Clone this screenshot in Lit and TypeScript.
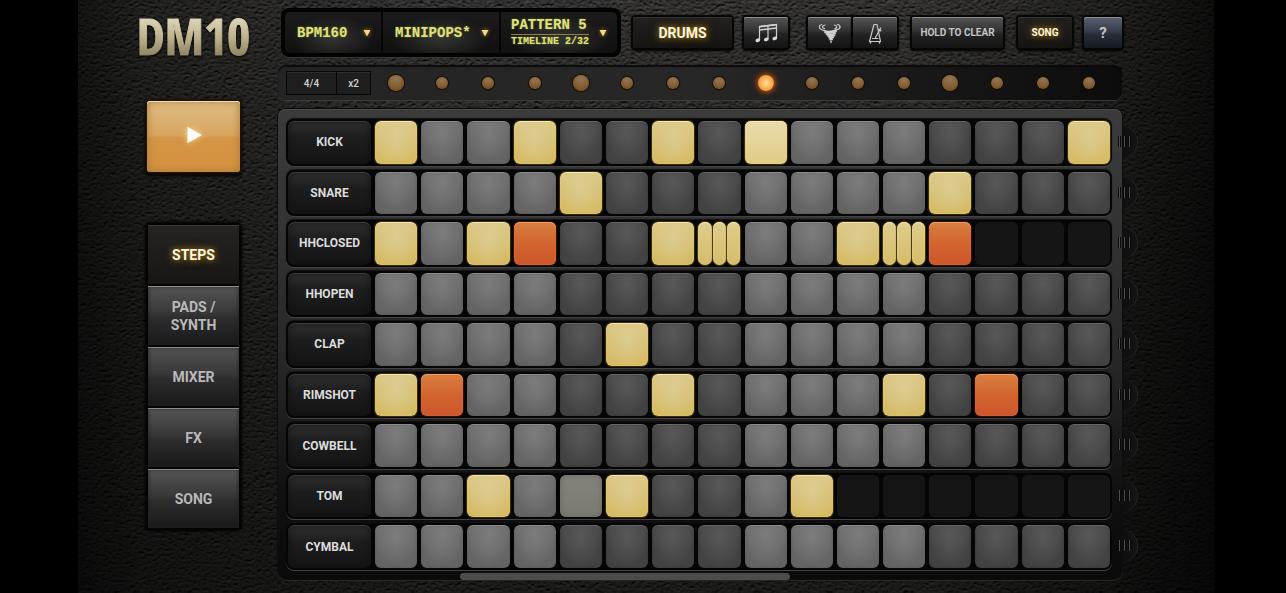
import { LitElement, html, css, svg } from "lit";
import { customElement, property, state } from "lit/decorators.js";
import { classMap } from "lit/directives/class-map.js";

type Step = "off" | "on" | "accent" | "roll" | "none" | "ghost";

interface Track {
  name: string;
  steps: Step[];
}

const CODES: Record<string, Step> = {
  ".": "off",
  y: "on",
  o: "accent",
  r: "roll",
  x: "none",
  g: "ghost",
};

const track = (name: string, pattern: string): Track => ({
  name,
  steps: [...pattern].map((c) => CODES[c]),
});

const TRACKS: Track[] = [
  track("KICK", "y..y..y.y......y"),
  track("SNARE", "....y.......y..."),
  track("HHCLOSED", "y.yo..yr..yroxxx"),
  track("HHOPEN", "................"),
  track("CLAP", ".....y.........."),
  track("RIMSHOT", "yo....y....y.o.."),
  track("COWBELL", "................"),
  track("TOM", "..y.gy...yxxxxxx"),
  track("CYMBAL", "................"),
];

const PLAYHEAD = 8;

@customElement("step-row")
class StepRow extends LitElement {
  @property({ attribute: false }) track!: Track;

  static styles = css`
    :host {
      position: relative;
      display: grid;
      grid-template-columns: 83px repeat(16, minmax(0, 1fr));
      gap: 4px;
      padding: 2px;
      border-radius: 8px;
      background: #050505;
      box-shadow: 0 1px 0 #424242, 0 -1px 1px #111;
    }
    button {
      appearance: none;
      border: 0;
      margin: 0;
      padding: 0;
      font: inherit;
      color: inherit;
      min-width: 0;
    }
    .name {
      border-radius: 7px;
      font-size: 12px;
      font-weight: 700;
      color: #dcdcdc;
      background: linear-gradient(#303030, #1d1d1d 40%, #141414);
      box-shadow: inset 0 1px 0 #3c3c3c, inset 0 0 6px #111;
    }
    .step {
      min-height: 36px;
      border-radius: 6px;
      background: radial-gradient(ellipse at 50% 25%, #7c7c7c, #7c7c7c00 70%), linear-gradient(#707070, #666 60%, #636363);
      box-shadow: inset 0 1px 0 #8a8a8a, inset 0 0 3px #5a5a5a;
    }
    .dim {
      background: radial-gradient(ellipse at 50% 25%, #585858, #58585800 70%), linear-gradient(#4a4a4a, #434343 60%, #424242);
      box-shadow: inset 0 1px 0 #666, inset 0 0 3px #383838;
    }
    .on {
      background: radial-gradient(ellipse at 50% 35%, #dccb90, #dccb9000 75%), linear-gradient(#dcc986, #d7c073 50%, #d5ba62);
      box-shadow: inset 0 1px 0 #f4e7b4, inset 0 0 2px #e6cf7c, 0 0 1px 1px #40310d;
    }
    .lit {
      background: linear-gradient(#e9dbad, #e0cb86);
    }
    .accent {
      background: linear-gradient(#d97f42, #d2642f 50%, #cc562b);
      box-shadow: inset 0 1px 0 #ee9a60, inset 0 0 2px #e3743c, 0 0 1px 1px #32150a;
    }
    .ghost {
      background: linear-gradient(#83837c, #7b7b72);
      box-shadow: inset 0 0 6px #66665b;
    }
    .none {
      background: #151515;
      box-shadow: inset 0 0 2px #1c1c1c;
    }
    .roll {
      display: grid;
      grid-template-columns: repeat(3, minmax(0, 1fr));
      gap: 1px;
      background: none;
      box-shadow: none;
    }
    .hit {
      height: 100%;
      border-radius: 7px;
      background: linear-gradient(#dfcd8c, #d5bc69);
      box-shadow: inset 0 1px 0 #f4e7b4, inset 0 0 2px #eed993, 0 0 1px 1px #4d3c10;
    }
    .grip {
      position: absolute;
      right: -25px;
      top: 7px;
      width: 24px;
      height: 32px;
      border-radius: 0 16px 16px 0;
      background: linear-gradient(90deg, transparent 9px, #0e0e0e 9px, #141414);
      box-shadow: 1px 0 0 #262626;
    }
    .grip svg {
      display: block;
      width: 24px;
      height: 32px;
    }
  `;

  private toggle(i: number) {
    const steps = [...this.track.steps];
    if (steps[i] === "none") return;
    steps[i] = steps[i] === "on" ? "off" : "on";
    this.track = { ...this.track, steps };
  }

  render() {
    const t = this.track;
    return html`
      <button class="name">${t.name}</button>
      ${t.steps.map(
        (s, i) => html`<button
          class=${classMap({
            step: true,
            dim: i % 8 > 3 && s === "off",
            lit: s === "on" && i === PLAYHEAD,
            [s]: s !== "off",
          })}
          aria-label="${t.name} step ${i + 1}"
          aria-pressed=${s === "off" || s === "none" ? "false" : "true"}
          ?disabled=${s === "none"}
          @click=${() => this.toggle(i)}
        >${s === "roll" ? [0, 1, 2].map(() => html`<span class="hit"></span>`) : ""}</button>`
      )}
      <button class="grip" aria-label="${t.name} options">
        <svg viewBox="0 0 24 32">
          <path d="M6.500 10v11M11.500 10v11M16.500 10v11" stroke="#090909" stroke-width="3" />
          <path d="M6.500 10v11M11.500 10v11M16.500 10v11" stroke="#505050" stroke-width="1" />
        </svg>
      </button>
    `;
  }
}

const arrow = html`<svg class="arrow" viewBox="0 0 8 8" aria-hidden="true"><path d="M.5 1h7L4 7.500z" fill="#f5d98a" /></svg>`;

const notes = svg`
  <g fill="none" stroke="#cfcfcf" stroke-width="1.200">
    <path d="M6.500 18V4.500L23.500 2.500V16M15 17V3.500" />
    <path d="M6.500 4.700L23.500 2.700" stroke-width="1.600" />
    <path d="M6.500 8L23.500 6" stroke-width="1.600" />
  </g>
  <g fill="#d6d6d6">
    <ellipse cx="4.800" cy="18.200" rx="2.400" ry="1.800" transform="rotate(-18 4.800 18.200)" />
    <ellipse cx="13.300" cy="17.400" rx="2.400" ry="1.800" transform="rotate(-18 13.300 17.400)" />
    <ellipse cx="21.800" cy="16.400" rx="2.400" ry="1.800" transform="rotate(-18 21.800 16.400)" />
  </g>`;

const tornado = svg`
  <g fill="none" stroke="#cfcfcf" stroke-linecap="round">
    <path d="M4.500 2.500C1.500 3.500 1.500 6.500 5 7.800l2.500.8M8 3C5 3.500 4.500 5.500 7.500 6.600M20.500 2.500c3.500 1 3.500 4-.5 5.300l-2 .5M17.500 3c3 .8 3 2.600.5 3.600" stroke-width="1.200" />
    <path d="M7.500 8.800C11 10 15 9.500 19 8M8 10.500c4 1 7.500.5 11-1M9.500 12.300c3 .7 6 .4 8.800-.9M11 14c2 .6 4.500.3 6.500-.6M12 15.800c1.500.4 2.800.2 4.300-.3M13 17.500h2.200" stroke-width="1.700" />
    <path d="M14 19v1.500" stroke-width="1.400" />
  </g>`;

const metronome = svg`
  <g fill="none" stroke="#c9c9c9" stroke-width="1.200" stroke-linejoin="round" stroke-linecap="round">
    <path d="M12 2.500h3L18.500 19.500H7.500z" />
    <path d="M10.500 16.500h5.500M13.500 15.500L18.800 6" />
    <path d="M16.700 7.500l2 1.200" stroke-width="1.600" />
    <path d="M8.500 20v1M17.500 20v1" stroke-width="1.500" />
  </g>`;

@customElement("app-root")
class AppRoot extends LitElement {
  @state() private page = "STEPS";

  static styles = css`
    :host {
      display: block;
      background: #000;
      font-family: Roboto, "Open Sans", sans-serif;
      color: #c4c4c4;
    }
    button,
    select {
      appearance: none;
      border: 0;
      margin: 0;
      padding: 0;
      font: inherit;
      color: inherit;
      background: none;
    }
    .device {
      position: relative;
      isolation: isolate;
      box-sizing: border-box;
      min-height: 100vh;
      margin: 0 72px 0 78px;
      padding: 8px 92px 14px 60px;
      display: grid;
      grid-template-columns: 111px minmax(0, 1fr);
      gap: 29px;
      background: #171716;
    }
    .leather {
      position: absolute;
      inset: 0;
      width: 100%;
      height: 100%;
      z-index: -2;
    }
    .shade {
      position: absolute;
      inset: 0;
      z-index: -1;
      background: linear-gradient(90deg, #0009, #0005 6%, transparent 30%, transparent 75%, #0005 90%, #000b),
        linear-gradient(transparent, #0002 20%, #0005 60%, #0007);
    }

    .side {
      display: flex;
      flex-direction: column;
    }
    .logo {
      display: flex;
      justify-content: center;
      margin: 0;
      height: 57px;
      line-height: 57px;
      font-family: "Open Sans Condensed", "Noto Sans Condensed", Roboto, sans-serif;
      font-weight: 900;
      font-size: 50px;
      white-space: nowrap;
      color: transparent;
      -webkit-text-stroke: 1px transparent;
      background: linear-gradient(#dcd4b6 20%, #b9ae88 55%, #8d8262 85%);
      -webkit-background-clip: text;
      background-clip: text;
      filter: drop-shadow(0 1px 1px #000);
    }
    .play {
      margin: 36px 9px 0;
      height: 71px;
      border-radius: 3px;
      display: grid;
      place-items: center;
      background: linear-gradient(#dfbd82, #d8a660 48%, #d49646 52%, #d5913f);
      box-shadow: inset 0 1px 0 #f5dca8, inset 0 0 8px #a8783a, 0 0 2px 2px #1f1406, 0 2px 3px 2px #000;
    }
    .play svg {
      width: 18px;
      height: 20px;
      filter: drop-shadow(0 0 3px #ffe2a0);
    }
    .nav {
      margin: 51px 8px 0;
      padding: 2px;
      display: grid;
      gap: 2px;
      border-radius: 4px;
      background: #040404;
      box-shadow: 0 0 3px 1px #000;
    }
    .tab {
      height: 59px;
      padding: 0 16px;
      font-size: 14px;
      line-height: 18px;
      font-weight: 700;
      color: #b9b9b9;
      background: linear-gradient(#555, #373737 46%, #2d2d2d 54%, #191919);
      box-shadow: inset 0 1px 0 #8b8b8b, inset 0 0 4px #222;
    }
    .tab.active,
    .glow {
      color: #fff6dc;
      text-shadow: 0 0 6px #b08020, 0 0 10px #6a480d;
      background: linear-gradient(#252422, #171614);
      box-shadow: inset 0 1px 0 #3a3835;
    }

    .main {
      display: grid;
      grid-template-rows: auto auto 1fr;
      gap: 9px;
      min-width: 0;
    }
    .top {
      display: flex;
      align-items: center;
      gap: 12px;
      padding-left: 3px;
    }
    .lcd {
      flex: 1;
      min-width: 0;
      height: 49px;
      box-sizing: border-box;
      padding: 4px;
      display: grid;
      grid-template-columns: 96px 118px minmax(0, 1fr);
      border-radius: 8px;
      background: #030303;
      box-shadow: 0 1px 0 #3a3835;
      font-family: "Liberation Mono", monospace;
      font-weight: 700;
      color: #dfe27c;
    }
    .field {
      display: flex;
      align-items: center;
      justify-content: space-between;
      padding: 0 10px 0 12px;
      border-left: 2px solid #060606;
      background: radial-gradient(ellipse at 50% 65%, #333332, #33333200 60%), linear-gradient(#1b1b1b, #101010);
      text-align: left;
      text-shadow: 0 0 2px #77742e;
    }
    .field:first-child {
      border-left: 0;
      border-radius: 5px 0 0 5px;
    }
    .field:last-child {
      border-radius: 0 5px 5px 0;
      padding-left: 10px;
    }
    .field select {
      flex: 1;
      min-width: 0;
      font-size: 14px;
      text-shadow: inherit;
    }
    .arrow {
      flex: none;
      width: 8px;
      height: 8px;
      filter: drop-shadow(0 0 2px #b77f16);
    }
    .pattern {
      display: block;
      font-size: 14px;
      line-height: 17px;
      border-bottom: 1px solid #8f8046;
    }
    .timeline {
      display: block;
      font-size: 10px;
      line-height: 14px;
    }
    .key {
      height: 31px;
      box-sizing: border-box;
      border-radius: 2px;
      display: grid;
      place-items: center;
      font-size: 10px;
      font-weight: 700;
      white-space: nowrap;
      background: linear-gradient(#555, #313131 46%, #232323 56%, #131313);
      box-shadow: inset 0 1px 0 #8c8c8c, 0 0 1px 2px #060606, 0 2px 3px 1px #000;
    }
    .key svg {
      width: 26px;
      height: 22px;
    }
    .drums {
      width: 99px;
      font-size: 14px;
    }
    .key.glow {
      background: linear-gradient(#22211f, #151412);
      box-shadow: inset 0 1px 0 #35332f, 0 0 1px 2px #060606, 0 2px 3px 1px #000;
    }
    .square {
      width: 44px;
    }
    .pair {
      display: flex;
      gap: 1px;
      margin-left: 8px;
    }
    .clear {
      width: 91px;
      margin-left: 3px;
    }
    .song {
      width: 54px;
      margin-left: 3px;
    }
    .help {
      width: 38px;
      font-size: 15px;
      background: linear-gradient(#596271, #363d4a 46%, #282e39 56%, #151922);
    }

    .bar {
      height: 34px;
      box-sizing: border-box;
      padding: 5px 12px 5px 8px;
      display: grid;
      grid-template-columns: 85px repeat(16, minmax(0, 1fr));
      gap: 4px;
      border-radius: 8px;
      background: linear-gradient(90deg, #242424, #272727 50%, #131313 85%, #0c0c0c);
      box-shadow: inset 0 1px 1px #0a0a0a, 0 1px 0 #3c3a37, 0 -1px 1px #0a0a0a;
    }
    .meter {
      display: grid;
      grid-template-columns: 49px minmax(0, 1fr);
      gap: 1px;
      padding: 1px;
      background: #070707;
    }
    .meter button {
      font-size: 10px;
      font-weight: 500;
      color: #d2d2d2;
      background: #1e1e1e;
      box-shadow: inset 0 1px 0 #2e2e2e;
    }
    .led {
      align-self: center;
      justify-self: center;
      width: 12px;
      height: 12px;
      border-radius: 50%;
      background: radial-gradient(circle at 50% 25%, #927658, #835c2e 60%, #66421a);
      box-shadow: 0 0 1px 1px #160c05;
    }
    .beat {
      width: 16px;
      height: 16px;
    }
    .led.now {
      background: radial-gradient(circle at 50% 50%, #ffdf9c, #f6a541 60%, #dd6d24);
      box-shadow: 0 0 4px 1px #b34d16, 0 0 9px 1px #6b3416;
    }

    .panel {
      position: relative;
      box-sizing: border-box;
      padding: 10px 10px 9px 8px;
      display: grid;
      grid-auto-rows: 1fr;
      gap: 4px;
      border-radius: 8px;
      background: linear-gradient(#3b3b3b, #333 25%, #262626 55%, #101010 82%, #0a0a0a);
      box-shadow: inset 0 1px 0 #4a4a4a, 0 0 1px 1px #0c0c0c, 0 1px 0 1px #2b2a28;
    }
    .scroll {
      position: absolute;
      left: 21.6%;
      width: 39.1%;
      bottom: -1px;
      height: 7px;
      border-radius: 4px;
      background: #4c4c4c;
    }
  `;

  render() {
    return html`
      <div class="device">
        <svg class="leather" aria-hidden="true">
          <filter id="grain" x="0" y="0" width="100%" height="100%" color-interpolation-filters="sRGB">
            <feTurbulence type="fractalNoise" baseFrequency=".26 .38" numOctaves="2" seed="7" />
            <feColorMatrix values="0 0 0 0 0  0 0 0 0 0  0 0 0 0 0  1.300 0.600 0 0 0" />
            <feDiffuseLighting surfaceScale="1.300" diffuseConstant="1" lighting-color="#fff">
              <feDistantLight azimuth="255" elevation="52" />
            </feDiffuseLighting>
            <feColorMatrix values=".38 0 0 0 -.11  0 .38 0 0 -.113  0 0 .37 0 -.113  0 0 0 1 0" />
          </filter>
          <rect width="100%" height="100%" filter="url(#grain)" />
        </svg>
        <div class="shade"></div>

        <div class="side">
          <h1 class="logo">DM10</h1>
          <button class="play" aria-label="Play">
            <svg viewBox="0 0 18 20"><path d="M2.500 0L17 8 2.500 16z" fill="#fff" /></svg>
          </button>
          <nav class="nav">
            ${["STEPS", "PADS / SYNTH", "MIXER", "FX", "SONG"].map(
              (p) => html`<button
                class=${classMap({ tab: true, active: p === this.page })}
                @click=${() => (this.page = p)}
              >${p}</button>`
            )}
          </nav>
        </div>

        <div class="main">
          <div class="top">
            <div class="lcd">
              <label class="field"
                ><select aria-label="Tempo"><option>BPM160</option></select>${arrow}</label
              >
              <label class="field"
                ><select aria-label="Kit"><option>MINIPOPS*</option></select>${arrow}</label
              >
              <button class="field">
                <span><span class="pattern">PATTERN 5</span><span class="timeline">TIMELINE 2/32</span></span>
                ${arrow}
              </button>
            </div>
            <button class="key glow drums">DRUMS</button>
            <button class="key square" aria-label="Notes"><svg viewBox="0 0 26 22">${notes}</svg></button>
            <div class="pair">
              <button class="key square" aria-label="Effects"><svg viewBox="0 0 26 22">${tornado}</svg></button>
              <button class="key square" aria-label="Metronome"><svg viewBox="0 0 26 22">${metronome}</svg></button>
            </div>
            <button class="key clear">HOLD TO CLEAR</button>
            <button class="key glow song">SONG</button>
            <button class="key help">?</button>
          </div>

          <div class="bar">
            <div class="meter"><button>4/4</button><button>x2</button></div>
            ${Array.from(
              { length: 16 },
              (_, i) => html`<span class=${classMap({ led: true, beat: i % 4 === 0, now: i === PLAYHEAD })}></span>`
            )}
          </div>

          <div class="panel">
            ${TRACKS.map((t) => html`<step-row .track=${t}></step-row>`)}
            <div class="scroll"></div>
          </div>
        </div>
      </div>
    `;
  }
}
